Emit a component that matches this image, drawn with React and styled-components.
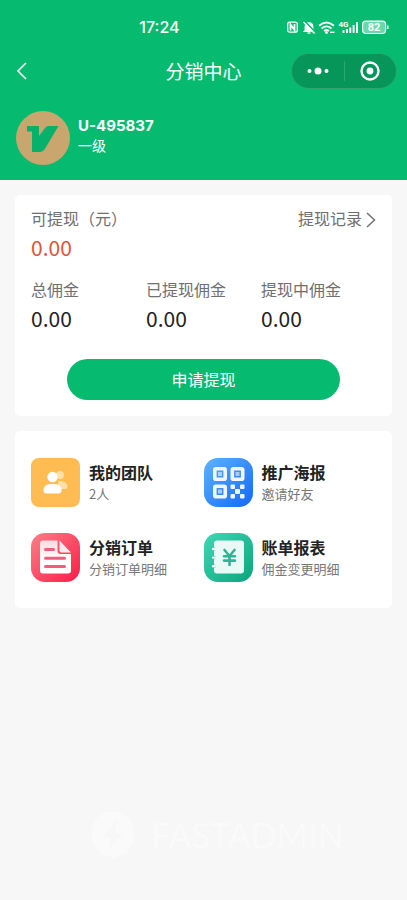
import React from "react";
import styled, { createGlobalStyle } from "styled-components";

const stats = [
  { label: "总佣金", value: "0.00" },
  { label: "已提现佣金", value: "0.00" },
  { label: "提现中佣金", value: "0.00" },
];

const entries = [
  { title: "我的团队", desc: "2人", Icon: TeamIcon },
  { title: "推广海报", desc: "邀请好友", Icon: PosterIcon },
  { title: "分销订单", desc: "分销订单明细", Icon: OrderIcon },
  { title: "账单报表", desc: "佣金变更明细", Icon: BillIcon },
];

function App() {
  return (
    <Page>
      <GlobalStyle />
      <Header>
        <StatusBar>
          <Clock>17:24</Clock>
          <StatusIcons />
        </StatusBar>
        <NavBar>
          <BackButton aria-label="返回">
            <svg width="12" height="20" viewBox="0 0 12 20">
              <path d="M10 2 2 10l8 8" fill="none" stroke="#fff" strokeWidth="1.6" />
            </svg>
          </BackButton>
          <h1>分销中心</h1>
          <Capsule>
            <CapsuleButton aria-label="更多">
              <svg width="22" height="8" viewBox="0 0 22 8" fill="#fff">
                <circle cx="2.5" cy="4" r="2" />
                <circle cx="11" cy="4" r="3.5" />
                <circle cx="19.5" cy="4" r="2" />
              </svg>
            </CapsuleButton>
            <CapsuleButton aria-label="关闭">
              <svg width="20" height="20" viewBox="0 0 20 20">
                <circle cx="10" cy="10" r="8.5" fill="none" stroke="#fff" strokeWidth="2.4" />
                <circle cx="10" cy="10" r="3.4" fill="#fff" />
              </svg>
            </CapsuleButton>
          </Capsule>
        </NavBar>
        <Profile>
          <Avatar />
          <ProfileText>
            <strong>U-495837</strong>
            <span>一级</span>
          </ProfileText>
        </Profile>
      </Header>

      <Card>
        <BalanceHead>
          <Label>可提现（元）</Label>
          <RecordLink href="#records">
            提现记录
            <svg width="10" height="16" viewBox="0 0 10 16">
              <path d="m1 1 7.5 7L1 15" fill="none" stroke="#707070" strokeWidth="1.5" />
            </svg>
          </RecordLink>
        </BalanceHead>
        <Amount $color="#e2533a">0.00</Amount>
        <Stats>
          {stats.map((item) => (
            <div key={item.label}>
              <Label>{item.label}</Label>
              <Amount>{item.value}</Amount>
            </div>
          ))}
        </Stats>
        <WithdrawButton>申请提现</WithdrawButton>
      </Card>

      <Card>
        <Entries>
          {entries.map(({ title, desc, Icon }) => (
            <Entry key={title} href="#entry">
              <Icon />
              <EntryText>
                <EntryTitle>{title}</EntryTitle>
                <EntryDesc>{desc}</EntryDesc>
              </EntryText>
            </Entry>
          ))}
        </Entries>
      </Card>

      <Brand>
        <svg width="44" height="50" viewBox="0 0 46 50">
          <path
            d="M15 1h14l12 7 4 12v12l-8 12-14 5-14-5L1 32V18L5 8z"
            fill="#fafafa"
          />
          <path d="M26 10 13 27h8l-3 15 15-19h-8l2-13z" fill="#f7f7f7" />
        </svg>
        FASTADMIN
      </Brand>
    </Page>
  );
}

export default App;

function StatusIcons() {
  return (
    <svg width="102" height="18" viewBox="0 0 102 18" fill="none" stroke="#fff">
      {/* nfc */}
      <rect x="0.7" y="4.2" width="9.600" height="10" rx="2" strokeWidth="1.300" />
      <path d="M3.500 12.500V6.500l4 5.500V6" strokeWidth="1.800" />
      {/* muted bell */}
      <path
        d="M18 12.500V8.500a4 4 0 0 1 8 0v4l1.500 1h-11zM20.500 15h3z"
        fill="#fff"
        strokeWidth="0.8"
      />
      <path d="m18 3.500 10.500 11" stroke="#06bb70" strokeWidth="1.600" />
      <path d="m16.500 4 11 11.500" strokeWidth="1.400" />
      {/* wifi */}
      <path d="M32 7.800q7.500-6.500 15 0M34.500 10.500q5-4.300 10 0M37 13q2.500-2 5 0" strokeWidth="1.800" />
      <circle cx="39.500" cy="14.600" r="1.400" fill="#fff" stroke="none" />
      <path d="M43 14.300h4.500" strokeWidth="1.400" />
      {/* signal */}
      <text x="51.5" y="9" fontSize="8" fontWeight="700" fontFamily="Roboto, sans-serif" fill="#fff" stroke="none">
        4G
      </text>
      <path d="M56.500 15v-3M60 15v-4M63.300 15V9.500M66.600 15V7M70 15V4" strokeWidth="1.900" />
      {/* battery */}
      <rect x="75.600" y="3.100" width="23" height="12.400" rx="3.500" fill="#6bd8a9" strokeWidth="1.200" />
      <path d="M100.800 7.500v3.500" strokeWidth="1.500" />
      <text
        x="87"
        y="13.2"
        fontSize="11"
        fontWeight="700"
        fontFamily="Roboto, sans-serif"
        textAnchor="middle"
        fill="#fff"
        stroke="none"
      >
        82
      </text>
    </svg>
  );
}

function Avatar() {
  return (
    <svg width="54" height="54" viewBox="0 0 54 54">
      <circle cx="27" cy="27" r="27" fill="#c8a66d" />
      <path
        d="M11 15h12v10l6-8q1.500-2 4-2h9.500L28.500 38.500Q26.500 41 23.500 41H16V20.500h-5z"
        fill="#06b16b"
      />
    </svg>
  );
}

function TeamIcon() {
  return (
    <svg width="49" height="49" viewBox="0 0 49 49">
      <rect width="49" height="49" rx="8" fill="#ffbc52" />
      <g fill="#ffe0a8">
        <circle cx="29" cy="17" r="4" />
        <path d="M27 23h3q6.500 1 6.500 6 0 2-2 2H27z" />
      </g>
      <g fill="#fff">
        <circle cx="21.500" cy="19" r="5.200" />
        <path d="M12.500 32.500q0-6.500 7-6.500h4q7 0 7 6.500 0 3-3 3h-12q-3 0-3-3z" />
      </g>
    </svg>
  );
}

function PosterIcon() {
  return (
    <svg width="49" height="49" viewBox="0 0 49 49">
      <defs>
        <linearGradient id="poster" x1="0" y1="0" x2="1" y2="1">
          <stop offset="0" stopColor="#5fb3fb" />
          <stop offset="1" stopColor="#1268fa" />
        </linearGradient>
      </defs>
      <rect width="49" height="49" rx="14" fill="url(#poster)" />
      <g fill="none" stroke="#eff6ff" strokeWidth="3.600">
        <rect x="10.800" y="10.800" width="10.400" height="10.400" rx="1" />
        <rect x="28.300" y="10.800" width="10.400" height="10.400" rx="1" />
        <rect x="10.800" y="28.300" width="10.400" height="10.400" rx="1" />
      </g>
      <g fill="#eff6ff">
        <rect x="14" y="14" width="4" height="4" opacity="0.6" />
        <rect x="31.500" y="14" width="4" height="4" opacity="0.6" />
        <rect x="14" y="31.500" width="4" height="4" opacity="0.6" />
        <rect x="26.500" y="26.500" width="4.500" height="4.500" rx="1" />
        <rect x="36" y="26.500" width="4.500" height="4.500" rx="1" />
        <rect x="31" y="31" width="5" height="5" rx="1" />
        <rect x="26.500" y="36" width="4.500" height="4.500" rx="1" />
        <rect x="36" y="36" width="4.500" height="4.500" rx="1" />
      </g>
    </svg>
  );
}

function OrderIcon() {
  return (
    <svg width="49" height="49" viewBox="0 0 49 49">
      <defs>
        <linearGradient id="order" x1="0" y1="0" x2="1" y2="1">
          <stop offset="0" stopColor="#fb7f86" />
          <stop offset="1" stopColor="#fb1d49" />
        </linearGradient>
        <linearGradient id="paper" x1="0" y1="0" x2="0" y2="1">
          <stop offset="0" stopColor="#ffdbe0" />
          <stop offset="0.600" stopColor="#fff" />
        </linearGradient>
      </defs>
      <rect width="49" height="49" rx="14" fill="url(#order)" />
      <path
        d="M12 7.500h14.500V18q0 3 3 3H40v16.500q0 3-3 3H12q-3 0-3-3v-27q0-3 3-3z"
        fill="url(#paper)"
      />
      <path d="M28.500 7.500 40 19.500h-9.500q-2 0-2-2z" fill="#ffe9ec" />
      <path
        d="M14.500 16.500h8M14.500 25.300h19M14.500 33.500h19"
        stroke="#ee5f7b"
        strokeWidth="3"
        strokeLinecap="round"
      />
    </svg>
  );
}

function BillIcon() {
  return (
    <svg width="49" height="49" viewBox="0 0 49 49">
      <defs>
        <linearGradient id="bill" x1="0" y1="0" x2="1" y2="1">
          <stop offset="0" stopColor="#40d6b5" />
          <stop offset="1" stopColor="#0aa57d" />
        </linearGradient>
      </defs>
      <rect width="49" height="49" rx="14" fill="url(#bill)" />
      <path
        d="M13 7.500h24q3 0 3 3v27q0 3-3 3H13q-3 0-3-3V35a1.800 1.800 0 0 0 0-3.600v-5a1.800 1.800 0 0 0 0-3.600v-5a1.800 1.800 0 0 0 0-3.600v-3.700q0-3 3-3z"
        fill="#e9f9f5"
      />
      <g stroke="#e9f9f5" strokeWidth="2.400" strokeLinecap="round">
        <path d="M9 16h2M9 24.600h2M9 33.200h2" />
      </g>
      <path
        d="m20.500 17 5 6 5-6M20 23.300h11M20 27.600h11M25.500 23.500V32"
        fill="none"
        stroke="#2fb596"
        strokeWidth="2.600"
        strokeLinecap="round"
      />
    </svg>
  );
}

const GlobalStyle = createGlobalStyle`
  * {
    box-sizing: border-box;
  }

  body {
    margin: 0;
    background: #f7f7f7;
    font-family: "Noto Sans CJK SC", sans-serif;
    -webkit-font-smoothing: antialiased;
  }

  button {
    padding: 0;
    border: 0;
    background: none;
    font: inherit;
    cursor: pointer;
  }

  a {
    color: inherit;
    text-decoration: none;
  }

  svg {
    display: block;
    flex-shrink: 0;
  }
`;

const Page = styled.div`
  display: flex;
  flex-direction: column;
  min-height: 100vh;
`;

const Header = styled.header`
  background: #06bb70;
  color: white;
  padding-bottom: 15px;
`;

const StatusBar = styled.div`
  display: grid;
  grid-template-columns: 1fr 1fr;
  align-items: center;
  height: 53px;
  padding: 0 18px;

  svg {
    justify-self: end;
  }
`;

const Clock = styled.time`
  justify-self: end;
  padding-right: 24px;
  font-family: Inter, sans-serif;
  font-size: 16px;
  font-weight: 500;
`;

const NavBar = styled.nav`
  display: grid;
  grid-template-columns: 1fr auto 1fr;
  align-items: center;
  height: 36px;
  padding: 0 10px;

  h1 {
    margin: 0;
    font-size: 19px;
    font-weight: 400;
    line-height: 36px;
  }
`;

const BackButton = styled.button`
  justify-self: start;
  padding: 0 6px;
`;

const Capsule = styled.div`
  justify-self: end;
  display: flex;
  align-items: center;
  width: 106px;
  height: 36px;
  border: 1px solid #2ba76f;
  border-radius: 18px;
  background: #06965a;
`;

const CapsuleButton = styled.button`
  flex: 1;
  display: flex;
  align-items: center;
  justify-content: center;
  height: 20px;

  & + & {
    border-left: 1px solid #2ba76f;
  }
`;

const Profile = styled.div`
  display: flex;
  gap: 8px;
  padding: 22px 16px 0;
`;

const ProfileText = styled.div`
  display: flex;
  flex-direction: column;
  padding-top: 4px;

  strong {
    font-family: Inter, sans-serif;
    font-size: 15px;
    font-weight: 700;
    line-height: 21px;
  }

  span {
    font-size: 14px;
    line-height: 18px;
  }
`;

const Card = styled.section`
  margin: 15px 15px 0;
  padding: 11px 16px 16px;
  border-radius: 5px;
  background: white;
`;

const BalanceHead = styled.div`
  display: flex;
  justify-content: space-between;
`;

const Label = styled.div`
  color: #707070;
  font-size: 16px;
  line-height: 24px;
`;

const RecordLink = styled.a`
  display: flex;
  align-items: center;
  gap: 4px;
  color: #707070;
  font-size: 16px;
  line-height: 24px;

  svg {
    margin-top: 4px;
  }
`;

const Amount = styled.div`
  color: ${(props) => props.$color || "#222"};
  font-size: 21px;
  line-height: 34px;
`;

const Stats = styled.div`
  display: grid;
  grid-template-columns: repeat(3, 1fr);
  margin-top: 13px;
`;

const WithdrawButton = styled.button`
  display: block;
  width: 79%;
  height: 41px;
  margin: 24px auto 0;
  padding-bottom: 2px;
  border-radius: 21px;
  background: #06bb70;
  color: white;
  font-size: 16px;
`;

const Entries = styled.div`
  display: grid;
  grid-template-columns: 1fr 1fr;
  row-gap: 26px;
  padding: 16px 0 10px;
`;

const Entry = styled.a`
  display: flex;
  align-items: center;
  gap: 9px;
`;

const EntryText = styled.div`
  padding-bottom: 2px;
`;

const EntryTitle = styled.div`
  color: #222;
  font-size: 16px;
  font-weight: 700;
  line-height: 23px;
`;

const EntryDesc = styled.div`
  color: #777;
  font-size: 13px;
  line-height: 19px;
`;

const Brand = styled.footer`
  display: flex;
  align-items: center;
  justify-content: center;
  gap: 16px;
  margin-top: auto;
  padding: 0 0 40px 28px;
  color: #fafafa;
  font-family: Lato, sans-serif;
  font-size: 34px;
  line-height: 50px;
`;
